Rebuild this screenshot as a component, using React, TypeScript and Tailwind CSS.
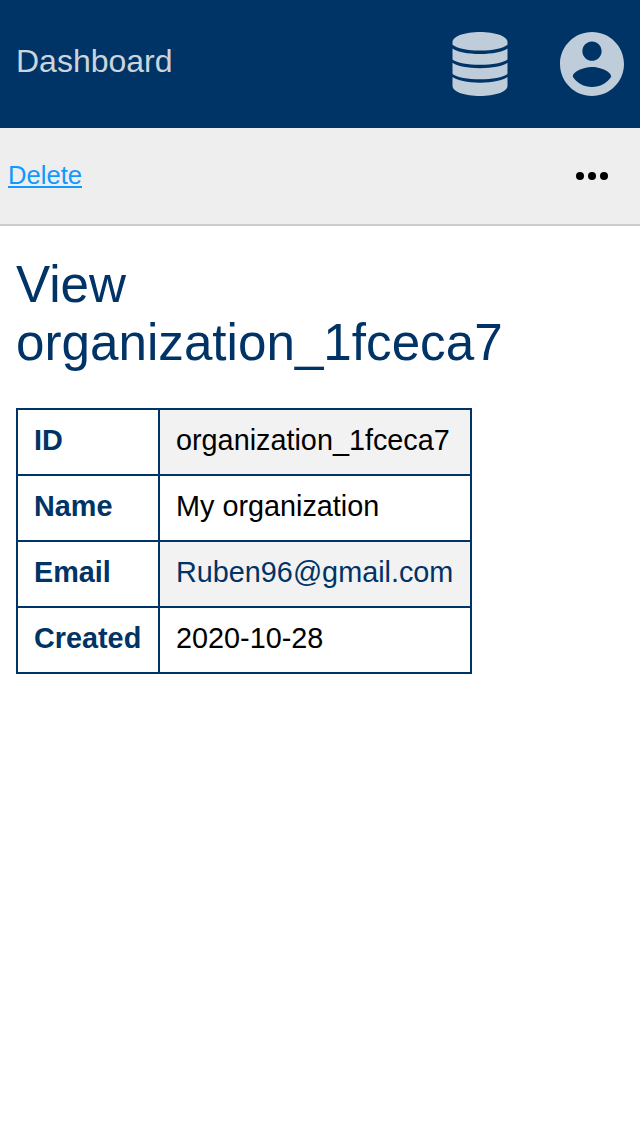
const rows = [
  { label: "ID", value: "organization_1fceca7" },
  { label: "Name", value: "My organization" },
  { label: "Email", value: "Ruben96@gmail.com", link: true },
  { label: "Created", value: "2020-10-28" },
];

function DatabaseIcon() {
  return (
    <svg viewBox="0 0 56 64" className="h-16 w-14" fill="currentColor">
      <path d="M28 0C43 0 55.5 4.3 55.5 10v2.800C51 16.500 40.500 18.600 28 18.600S5 16.500.5 12.800V10C.5 4.300 13 0 28 0Z" />
      <path d="M.5 16.600C5 20 15.500 22.100 28 22.100s23-2.100 27.500-5.500v10.800C51 30.800 40 32.700 28 32.700S5 30.800.5 27.400Z" />
      <path d="M.5 30.800C5 34.200 15.500 36.200 28 36.200s23-2 27.500-5.400v11.100C51 45.200 40 47.200 28 47.200S5 45.200.5 41.900Z" />
      <path d="M.5 45.100C5 48.500 15.500 50.700 28 50.700s23-2.200 27.500-5.600V54C55.500 59.700 43 64 28 64S.5 59.700.5 54Z" />
    </svg>
  );
}

function AccountIcon() {
  return (
    <svg viewBox="2 2 20 20" className="size-16" fill="currentColor">
      <path d="M12 2C6.480 2 2 6.480 2 12s4.480 10 10 10 10-4.480 10-10S17.520 2 12 2zm0 3c1.660 0 3 1.340 3 3s-1.340 3-3 3-3-1.340-3-3 1.340-3 3-3zm0 14.200c-2.500 0-4.710-1.280-6-3.220.03-1.990 4-3.080 6-3.080 1.990 0 5.970 1.090 6 3.080-1.290 1.940-3.500 3.220-6 3.220z" />
    </svg>
  );
}

export default function App() {
  return (
    <div className="min-h-screen bg-white font-['Liberation_Sans',Arial,sans-serif] text-black">
      <header className="flex h-32 items-center justify-between bg-[#003366] px-4 text-[#bfccd9]">
        <a className="pb-1.5 text-[32px] leading-10 text-[#cbd5db]">Dashboard</a>
        <div className="flex items-center gap-[52px]">
          <DatabaseIcon />
          <AccountIcon />
        </div>
      </header>
      <nav className="flex h-[98px] items-center justify-between border-b-2 border-[#cccccc] bg-[#eeeeee] pr-8 pl-2">
        <a className="pb-0.5 text-[25.6px] leading-8 text-[#1199ff] underline decoration-2 underline-offset-2">
          Delete
        </a>
        <svg viewBox="0 0 32 8" className="h-2 w-8" fill="currentColor">
          <circle cx="4" cy="4" r="4" />
          <circle cx="16" cy="4" r="4" />
          <circle cx="28" cy="4" r="4" />
        </svg>
      </nav>
      <main className="px-4 pt-[30px]">
        <h1 className="w-[500px] text-[51.2px] leading-[58px] text-[#003366]">
          View organization_1fceca7
        </h1>
        <table className="mt-9 w-[456px] table-fixed border-collapse text-[28.8px] leading-8">
          <colgroup>
            <col className="w-[142px]" />
            <col />
          </colgroup>
          <tbody>
            {rows.map((row) => (
              <tr key={row.label} className="h-[66px] odd:[&>td]:bg-[#f2f2f2]">
                <th className="border-2 border-[#003366] px-4 pt-0 pb-1 text-left font-bold text-[#003366]">
                  {row.label}
                </th>
                <td className="border-2 border-[#003366] px-4 pt-0 pb-1">
                  {row.link ? <a className="text-[#003366]">{row.value}</a> : row.value}
                </td>
              </tr>
            ))}
          </tbody>
        </table>
      </main>
    </div>
  );
}
